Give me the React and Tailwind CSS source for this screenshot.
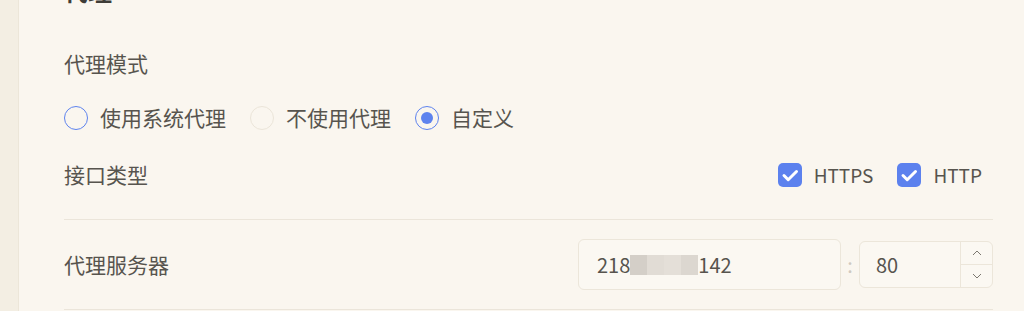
import React from "react";

const Radio = ({ label, checked, hover }) => (
  <label className="flex items-center gap-[12px] cursor-pointer">
    <span
      className={`flex items-center justify-center w-[24px] h-[24px] rounded-full border ${
        checked || hover ? "border-[#5e83ee]" : "border-[#ebe5d9]"
      }`}
    >
      {checked && <span className="w-[12px] h-[12px] rounded-full bg-[#5e83ee]" />}
    </span>
    <span>{label}</span>
  </label>
);

const Checkbox = ({ label }) => (
  <label className="flex items-center gap-[12px]">
    <span className="flex items-center justify-center w-[24px] h-[24px] rounded-[5px] bg-[#5c81ee]">
      <svg width="24" height="24" viewBox="0 0 24 24" fill="none">
        <path d="M6 12.5l4.2 4.2L18.5 8.5" stroke="white" strokeWidth="3" strokeLinecap="round" strokeLinejoin="round" />
      </svg>
    </span>
    <span className="text-[19px]">{label}</span>
  </label>
);

export default function App() {
  return (
    <div
      className="flex h-[311px] overflow-hidden text-[21px] text-[#57544e]"
      style={{ fontFamily: '"Noto Sans CJK SC", "Noto Sans", sans-serif' }}
    >
      <div className="w-[19px] shrink-0 bg-[#f3eee3] border-r border-[#ece6d9]" />
      <div className="flex-1 bg-[#faf6ef] pl-[45px] pr-[31px]">
        <h2 className="-mt-[25px] h-[32px] leading-[32px] text-[24px] font-bold text-[#3f3d38]">代理</h2>

        <div className="mt-[37px] h-[40px] flex items-center">代理模式</div>

        <div className="mt-[14px] h-[40px] flex items-center gap-[24px]">
          <Radio label="使用系统代理" hover />
          <Radio label="不使用代理" />
          <Radio label="自定义" checked />
        </div>

        <div className="mt-[17px] h-[40px] flex items-center justify-between">
          <span>接口类型</span>
          <div className="flex items-center gap-[24px] pr-[11px]">
            <Checkbox label="HTTPS" />
            <Checkbox label="HTTP" />
          </div>
        </div>

        <div className="mt-[24px] h-[91px] border-t border-b border-[#ebe5da] flex items-center justify-between">
          <span>代理服务器</span>
          <div className="flex items-center text-[20px]">
            <div className="w-[263px] h-[51px] rounded-[6px] border border-[#ece6da] bg-[#fbf8f2] flex items-center pl-[18px]">
              <span>218</span>
              <span className="flex h-[20px]">
                <span className="w-[17px] bg-[#d4cfc8]" />
                <span className="w-[17px] bg-[#e1dcd5]" />
                <span className="w-[17px] bg-[#e4dfd8]" />
                <span className="w-[17px] bg-[#dcd7d0]" />
              </span>
              <span>142</span>
            </div>
            <span className="w-[18px] text-center text-[#cfc9bf]">:</span>
            <div className="w-[134px] h-[47px] rounded-[6px] border border-[#ece6da] bg-[#fbf8f2] flex">
              <div className="flex-1 flex items-center pl-[16px]">80</div>
              <div className="w-[32px] border-l border-[#ece6da] flex flex-col">
                <div className="flex-1 flex items-center justify-center border-b border-[#ece6da]">
                  <svg width="10" height="6" viewBox="0 0 10 6" fill="none">
                    <path d="M1 5l4-4 4 4" stroke="#7c7870" strokeWidth="1" />
                  </svg>
                </div>
                <div className="flex-1 flex items-center justify-center">
                  <svg width="10" height="6" viewBox="0 0 10 6" fill="none">
                    <path d="M1 1l4 4 4-4" stroke="#7c7870" strokeWidth="1" />
                  </svg>
                </div>
              </div>
            </div>
          </div>
        </div>
      </div>
    </div>
  );
}
